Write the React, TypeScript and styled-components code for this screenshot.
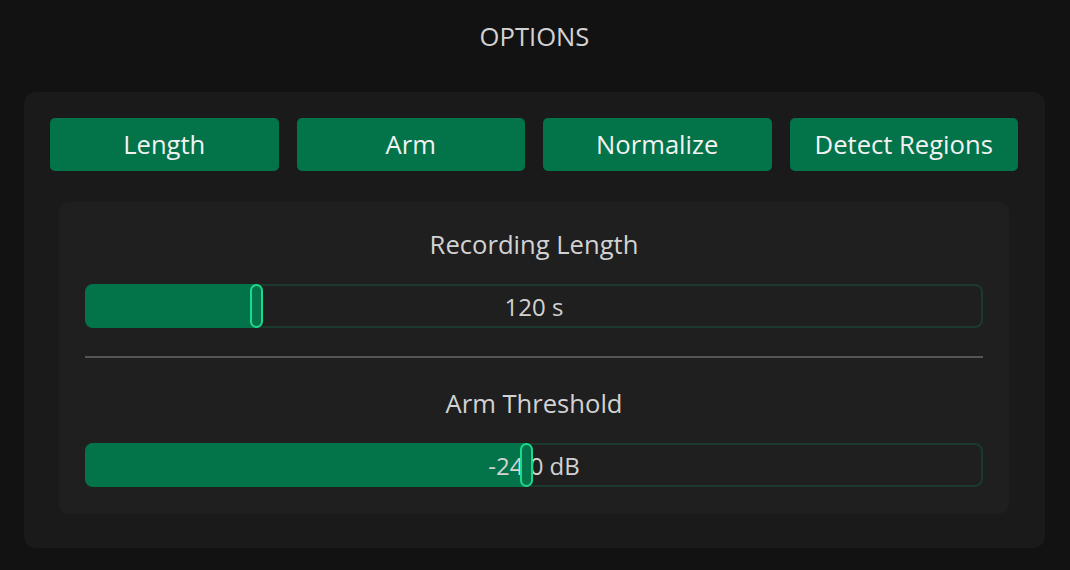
import React from 'react';
import styled, { createGlobalStyle } from 'styled-components';

const GREEN = '#03734a';
const GREEN_BRIGHT = '#1ed98c';
const GREEN_DARK = '#1a3a2d';
const TEXT = '#d2d2d2';

const GlobalStyle = createGlobalStyle`
	html,
	body {
		margin: 0;
		background: #121212;
		font-family: 'Open Sans', 'Noto Sans', sans-serif;
	}
`;

const Page = styled.div`
	padding: 0 25px 0 24px;
`;

const Title = styled.h1`
	margin: 0;
	padding-top: 20px;
	margin-bottom: 38px;
	font-size: 25.6px;
	line-height: 34px;
	font-weight: 400;
	text-align: center;
	color: ${TEXT};
`;

const Card = styled.section`
	background: #1a1a1a;
	border-radius: 12px;
	padding: 26px 27px 34px 26px;
`;

const ButtonRow = styled.div`
	display: grid;
	grid-template-columns: repeat(4, 1fr);
	gap: 18px;
`;

const ActionButton = styled.button`
	height: 53px;
	border: none;
	border-radius: 5px;
	background: ${GREEN};
	color: #f2f2f2;
	font-family: inherit;
	font-size: 25.6px;
	padding: 0;
	cursor: pointer;
`;

const Panel = styled.div`
	margin: 31px 9px 0;
	padding: 26px 26px 27px;
	background: #1f1f1f;
	border-radius: 10px;
`;

const Label = styled.div`
	font-size: 25.6px;
	line-height: 34px;
	text-align: center;
	color: ${TEXT};
	margin-bottom: 22px;
`;

const Divider = styled.hr`
	border: none;
	height: 2px;
	background: #555555;
	margin: 28px 0 29px;
`;

const Track = styled.div`
	position: relative;
	height: 44px;
	box-sizing: border-box;
	border: 2px solid ${GREEN_DARK};
	border-radius: 8px;
`;

const Fill = styled.div`
	position: absolute;
	left: -2px;
	top: -2px;
	bottom: -2px;
	border-radius: 8px 0 0 8px;
	background: ${GREEN};
`;

const Value = styled.div`
	position: relative;
	height: 100%;
	display: flex;
	align-items: center;
	justify-content: center;
	font-size: 24px;
	color: ${TEXT};
`;

const Thumb = styled.div`
	position: absolute;
	top: -2px;
	bottom: -2px;
	width: 13px;
	box-sizing: border-box;
	border: 2px solid ${GREEN_BRIGHT};
	border-radius: 7px;
	background: ${GREEN};
`;

const TRACK_WIDTH = 897;
const THUMB_WIDTH = 13;

function Slider({ label, value, fraction }: { label: string; value: string; fraction: number }) {
	const thumbLeft = fraction * (TRACK_WIDTH - THUMB_WIDTH) - 2;
	return (
		<div>
			<Label>{label}</Label>
			<Track>
				<Fill style={{ width: thumbLeft + THUMB_WIDTH / 2 + 2 }} />
				<Value>{value}</Value>
				<Thumb style={{ left: thumbLeft }} />
			</Track>
		</div>
	);
}

export default function App() {
	return (
		<Page>
			<GlobalStyle />
			<Title>OPTIONS</Title>
			<Card>
				<ButtonRow>
					<ActionButton>Length</ActionButton>
					<ActionButton>Arm</ActionButton>
					<ActionButton>Normalize</ActionButton>
					<ActionButton>Detect Regions</ActionButton>
				</ButtonRow>
				<Panel>
					<Slider label="Recording Length" value="120 s" fraction={0.187} />
					<Divider />
					<Slider label="Arm Threshold" value="-24.0 dB" fraction={0.492} />
				</Panel>
			</Card>
		</Page>
	);
}
